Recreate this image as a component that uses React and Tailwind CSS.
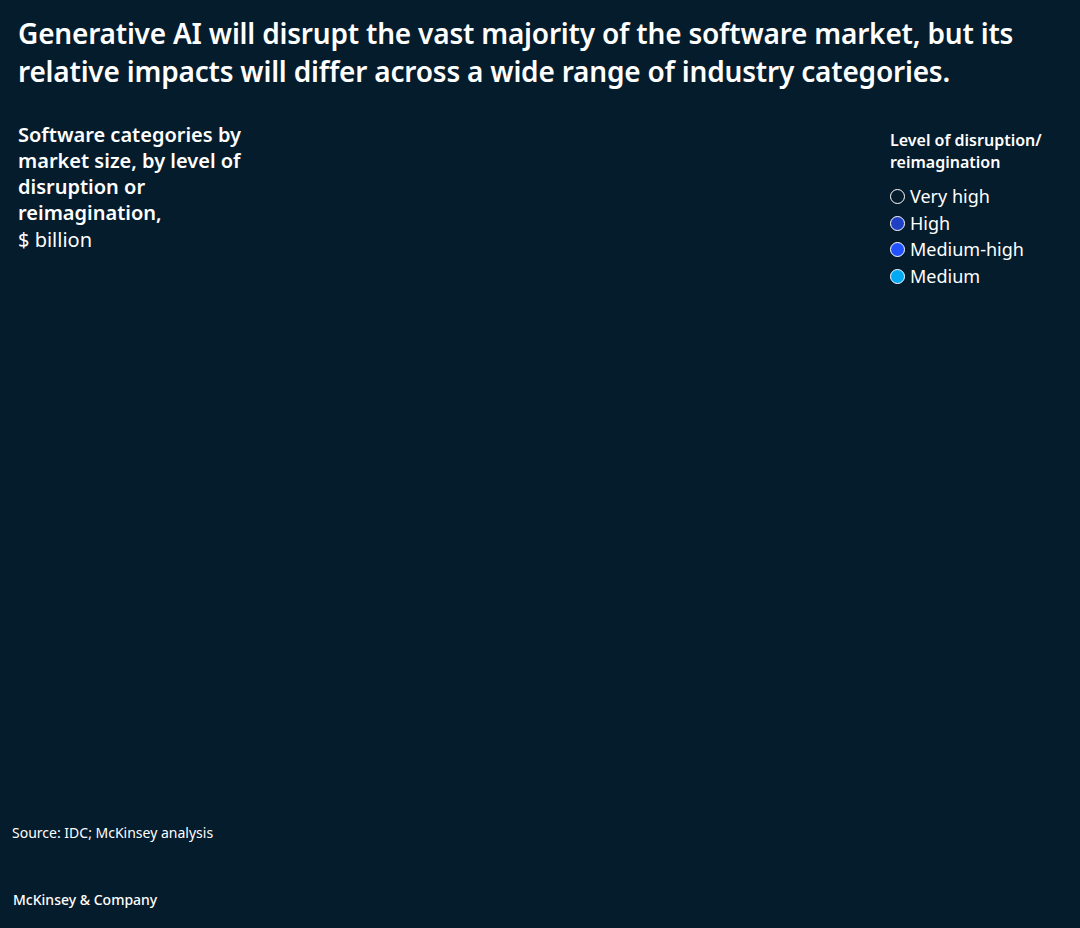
export default function App() {
  const legend = [
    { label: 'Very high', cls: 'bg-transparent border-white' },
    { label: 'High', cls: 'bg-[#1f40c4] border-white' },
    { label: 'Medium-high', cls: 'bg-[#2251ff] border-white' },
    { label: 'Medium', cls: 'bg-[#00a9f4] border-white' },
  ];
  return (
    <div className="h-[928px] w-[1080px] bg-[#051c2c] text-white flex flex-col font-['Inter',sans-serif] overflow-hidden">
      <h1 className="px-[18px] pt-[14px] text-[28px] leading-[38px] font-semibold tracking-[-0.2px]">
        Generative AI will disrupt the vast majority of the software market, but its relative impacts will differ across a wide range of industry categories.
      </h1>
      <div className="flex justify-between mt-[32px]">
        <div className="pl-[18px] w-[250px]">
          <p className="text-[20px] leading-[26px] font-semibold">Software categories by market size, by level of disruption or reimagination,</p>
          <p className="text-[20px] leading-[28px]">$ billion</p>
        </div>
        <div className="w-[190px]">
          <p className="text-[16px] leading-[22px] font-semibold mt-[7px]">Level of disruption/ reimagination</p>
          <ul className="mt-[12px] space-y-[3px]">
            {legend.map(l => (
              <li key={l.label} className="flex items-center gap-[5px] text-[18px] leading-[23.5px]">
                <span className={`w-[15px] h-[15px] rounded-full border-[1.5px] ${l.cls}`} />
                {l.label}
              </li>
            ))}
          </ul>
        </div>
      </div>
      <div className="flex-1" />
      <p className="pl-[12px] text-[14px] leading-[18px] mb-[49px]">Source: IDC; McKinsey analysis</p>
      <p className="pl-[13px] text-[14px] leading-[18px] font-medium mb-[19px]">McKinsey &amp; Company</p>
    </div>
  );
}
